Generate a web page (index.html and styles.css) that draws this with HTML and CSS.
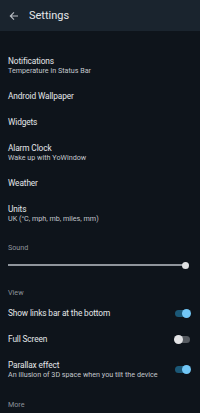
FILE: index.html
```html
<!DOCTYPE html>
<html>
<head>
<meta charset="utf-8">
<link rel="stylesheet" href="styles.css">
</head>
<body>
<div class="app">
  <header class="bar">
    <svg class="back" width="10" height="10" viewBox="0 0 10 10"><path d="M9 5H1.5M5 1.3L1.3 5 5 8.7" fill="none" stroke="#b9bec4" stroke-width="1.1"/></svg>
    <span class="title">Settings</span>
  </header>
  <div class="list">
    <div class="row two"><div class="t">Notifications</div><div class="s">Temperature in Status Bar</div></div>
    <div class="row"><div class="t">Android Wallpaper</div></div>
    <div class="row"><div class="t">Widgets</div></div>
    <div class="row two"><div class="t">Alarm Clock</div><div class="s">Wake up with YoWindow</div></div>
    <div class="row"><div class="t">Weather</div></div>
    <div class="row two"><div class="t">Units</div><div class="s">UK (°C, mph, mb, miles, mm)</div></div>
    <div class="sect first">Sound</div>
    <div class="slider"><div class="track"></div><div class="knob"></div></div>
    <div class="sect">View</div>
    <div class="row sw"><div class="txt"><div class="t">Show links bar at the bottom</div></div><div class="toggle on"></div></div>
    <div class="row sw"><div class="txt"><div class="t">Full Screen</div></div><div class="toggle"></div></div>
    <div class="row two sw"><div class="txt"><div class="t">Parallax effect</div><div class="s">An illusion of 3D space when you tilt the device</div></div><div class="toggle on"></div></div>
    <div class="sect more">More</div>
  </div>
</div>
</body>
</html>
```
FILE: styles.css
```css
* { box-sizing: border-box; }
html, body { margin: 0; padding: 0; }
body {
  background: #0e141b;
  font-family: Roboto, "Noto Sans", sans-serif;
  color: #e4e7ea;
  width: 200px;
  height: 413px;
  overflow: hidden;
}
.bar {
  height: 31px;
  background: #1a242e;
  display: flex;
  align-items: center;
  padding-left: 9px;
}
.back { margin-right: 10px; }
.title { font-size: 11px; color: #e4e7ea; }
.list { padding-top: 17px; }
.row {
  height: 26px;
  display: flex;
  flex-direction: column;
  justify-content: center;
  padding: 0 8px;
}
.row.two { height: 35px; }
.row.sw { flex-direction: row; align-items: center; justify-content: space-between; padding-right: 10px; }
.t { font-size: 8.3px; line-height: 10px; letter-spacing: -0.12px; color: #e4e7ea; }
.s { font-size: 7.2px; line-height: 10px; color: #c3c7cc; }
.sect {
  height: 16px;
  display: flex;
  align-items: center;
  padding: 0 8px;
  font-size: 7.2px;
  color: #8d939a;
}
.sect.first { margin-top: 8px; }
.sect.more { margin-top: 9px; }
.slider {
  height: 20px;
  margin: 0 14px 9px 8px;
  display: flex;
  align-items: center;
  position: relative;
}
.slider .track { flex: 1; height: 2px; background: #8f959c; }
.slider .knob {
  position: absolute; right: -3px; top: 7px;
  width: 7px; height: 7px; border-radius: 50%; background: #dfe1e3;
}
.toggle {
  width: 15px; height: 7px; border-radius: 4px;
  background: #555a60; position: relative;
}
.toggle::after {
  content: ""; position: absolute; top: -1px; left: -1px;
  width: 9px; height: 9px; border-radius: 50%; background: #e3e4e6;
}
.toggle.on { background: #1b5877; }
.toggle.on::after { left: auto; right: -1px; background: #72c7f6; }
```
